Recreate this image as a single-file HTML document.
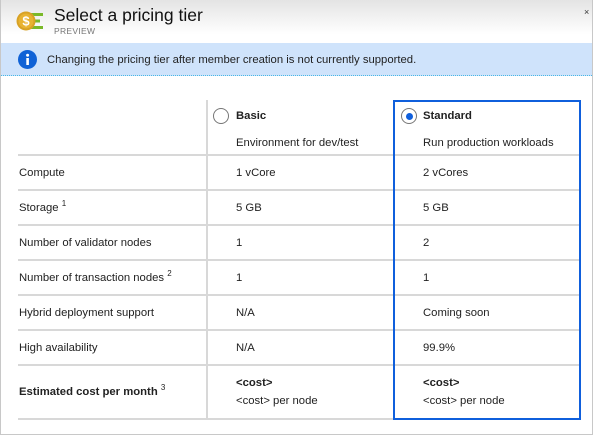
<!DOCTYPE html>
<html><head><meta charset="utf-8"><style>
*{margin:0;padding:0;box-sizing:border-box}
body{width:594px;height:436px;overflow:hidden;background:#fff;font-family:"Liberation Sans",sans-serif;color:#222;position:relative;font-size:12px}
.frame{position:absolute;left:0;top:0;width:593px;height:435px;border:1px solid #c8c8c8;border-top:none}
.hdr{position:absolute;left:1px;top:0;width:591px;height:43px;background:linear-gradient(#e4e4e4,#fff 80%)}
.title{position:absolute;left:54px;top:5px;font-size:17.5px;color:#111}
.prev{position:absolute;left:54px;top:26px;font-size:8.5px;color:#777;letter-spacing:.3px}
.banner{position:absolute;left:1px;top:43px;width:591px;height:33px;background:#cfe3fb;border-bottom:1px dotted #47b8e6}
.btxt{position:absolute;left:47px;top:54px;font-size:11.3px;color:#222}
.t{position:absolute;white-space:nowrap;font-size:11.3px;line-height:13px}
.hl{position:absolute;left:18px;width:563px;height:2px;background:#d8d8d8}
.vl{position:absolute;width:2px;background:#d8d8d8}
.box{position:absolute;left:393px;top:100px;width:188px;height:320px;border:2px solid #0f5fdc}
.radio{position:absolute;width:16px;height:16px;border:1px solid #777;border-radius:50%;background:#fff}
.dot{position:absolute;left:3.5px;top:3.5px;width:7px;height:7px;border-radius:50%;background:#0f5fdc}
sup{font-size:8px;position:relative;top:-5px;vertical-align:baseline;line-height:0}
b{font-weight:bold}
</style></head><body>
<div class="hdr"></div>
<div class="frame"></div>
<svg style="position:absolute;left:16px;top:10px" width="30" height="22" viewBox="0 0 30 22">
<rect x="13" y="3" width="14" height="3" fill="#7ab929"/><rect x="13" y="9.5" width="11" height="3" fill="#7ab929"/><rect x="13" y="16" width="14" height="3" fill="#7ab929"/>
<circle cx="10" cy="11" r="9.5" fill="#d8a225"/><circle cx="10" cy="11" r="7.5" fill="#e8b332"/>
<text x="10" y="15.5" text-anchor="middle" font-family="Liberation Sans" font-weight="bold" font-size="13" fill="#fff">$</text></svg>
<div class="title">Select a pricing tier</div>
<div class="prev">PREVIEW</div>
<div style="position:absolute;left:584px;top:7px;font-size:9px;color:#333">×</div>
<div class="banner"></div>
<svg style="position:absolute;left:18px;top:50px" width="19" height="19"><circle cx="9.5" cy="9.5" r="9.5" fill="#0f62d6"/><rect x="8.3" y="8" width="2.6" height="7" fill="#fff"/><circle cx="9.6" cy="5.2" r="1.5" fill="#fff"/></svg>
<div class="btxt">Changing the pricing tier after member creation is not currently supported.</div>

<div class="vl" style="left:206px;top:100px;height:320px"></div>
<div class="hl" style="top:154px"></div>
<div class="hl" style="top:189px"></div>
<div class="hl" style="top:224px"></div>
<div class="hl" style="top:259px"></div>
<div class="hl" style="top:294px"></div>
<div class="hl" style="top:329px"></div>
<div class="hl" style="top:364px"></div>
<div class="hl" style="top:418px"></div>
<div class="box"></div>

<div class="radio" style="left:213px;top:108px"></div>
<div class="radio" style="left:401px;top:108px"><div class="dot"></div></div>
<div class="t" style="left:236px;top:110px"><b>Basic</b></div>
<div class="t" style="left:423px;top:110px"><b>Standard</b></div>
<div class="t" style="left:236px;top:137px">Environment for dev/test</div>
<div class="t" style="left:423px;top:137px">Run production workloads</div>

<div class="t" style="left:19px;top:167px">Compute</div>
<div class="t" style="left:236px;top:167px">1 vCore</div>
<div class="t" style="left:423px;top:167px">2 vCores</div>
<div class="t" style="left:19px;top:202px">Storage <sup>1</sup></div>
<div class="t" style="left:236px;top:202px">5 GB</div>
<div class="t" style="left:423px;top:202px">5 GB</div>
<div class="t" style="left:19px;top:237px">Number of validator nodes</div>
<div class="t" style="left:236px;top:237px">1</div>
<div class="t" style="left:423px;top:237px">2</div>
<div class="t" style="left:19px;top:272px">Number of transaction nodes <sup>2</sup></div>
<div class="t" style="left:236px;top:272px">1</div>
<div class="t" style="left:423px;top:272px">1</div>
<div class="t" style="left:19px;top:307px">Hybrid deployment support</div>
<div class="t" style="left:236px;top:307px">N/A</div>
<div class="t" style="left:423px;top:307px">Coming soon</div>
<div class="t" style="left:19px;top:342px">High availability</div>
<div class="t" style="left:236px;top:342px">N/A</div>
<div class="t" style="left:423px;top:342px">99.9%</div>
<div class="t" style="left:19px;top:386px"><b>Estimated cost per month</b> <sup>3</sup></div>
<div class="t" style="left:236px;top:377px"><b>&lt;cost&gt;</b></div>
<div class="t" style="left:236px;top:395px">&lt;cost&gt; per node</div>
<div class="t" style="left:423px;top:377px"><b>&lt;cost&gt;</b></div>
<div class="t" style="left:423px;top:395px">&lt;cost&gt; per node</div>
</body></html>
